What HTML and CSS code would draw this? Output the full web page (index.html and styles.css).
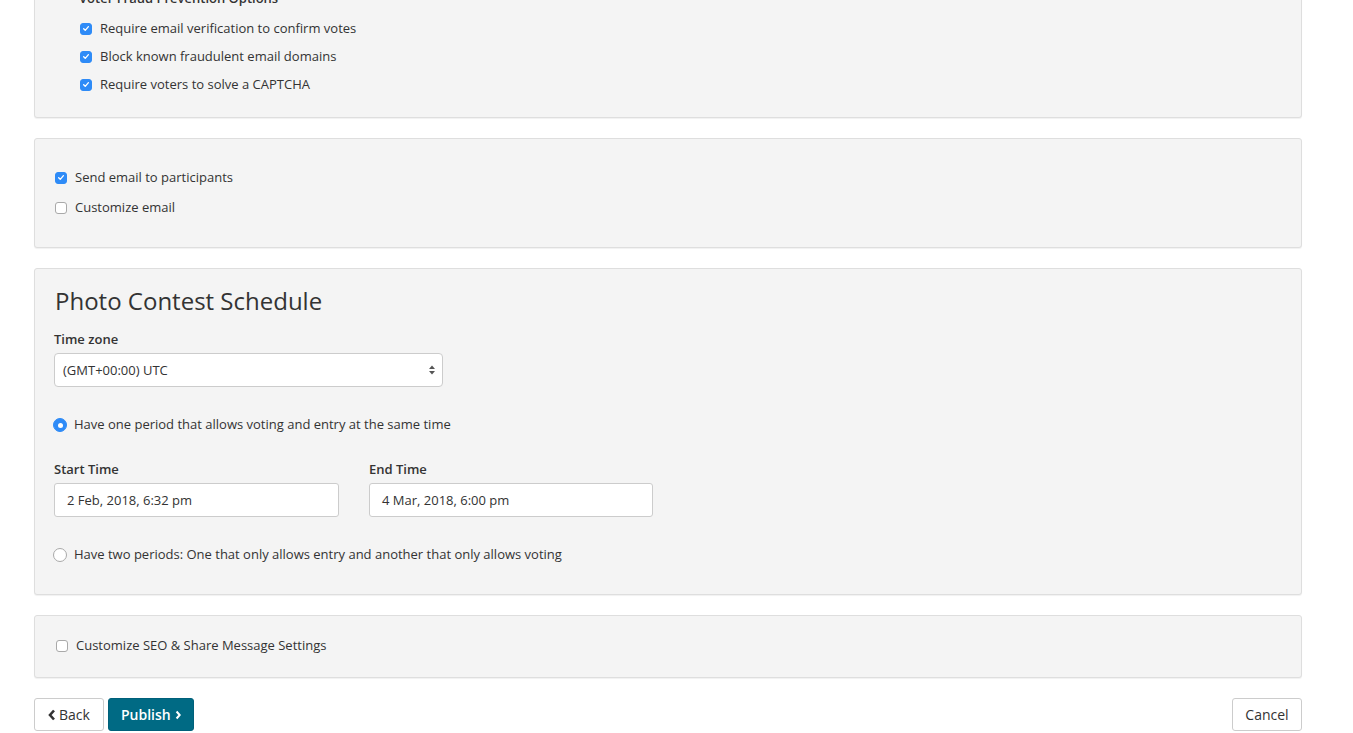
FILE: index.html
```html
<!DOCTYPE html>
<html>
<head>
<meta charset="utf-8">
<link rel="stylesheet" href="styles.css">
</head>
<body>
<div class="page">
  <section class="panel panel-fraud">
    <div class="fraud-group">
      <div class="group-title">Voter Fraud Prevention Options</div>
      <label class="row"><span class="cb on"><svg viewBox="0 0 12 12"><path d="M3.2 6.3l1.9 1.9 3.8-4.4" fill="none" stroke="#fff" stroke-width="1.6" stroke-linecap="round" stroke-linejoin="round"/></svg></span>Require email verification to confirm votes</label>
      <label class="row"><span class="cb on"><svg viewBox="0 0 12 12"><path d="M3.2 6.3l1.9 1.9 3.8-4.4" fill="none" stroke="#fff" stroke-width="1.6" stroke-linecap="round" stroke-linejoin="round"/></svg></span>Block known fraudulent email domains</label>
      <label class="row"><span class="cb on"><svg viewBox="0 0 12 12"><path d="M3.2 6.3l1.9 1.9 3.8-4.4" fill="none" stroke="#fff" stroke-width="1.6" stroke-linecap="round" stroke-linejoin="round"/></svg></span>Require voters to solve a CAPTCHA</label>
    </div>
  </section>

  <section class="panel panel-email">
    <label class="row"><span class="cb on"><svg viewBox="0 0 12 12"><path d="M3.2 6.3l1.9 1.9 3.8-4.4" fill="none" stroke="#fff" stroke-width="1.6" stroke-linecap="round" stroke-linejoin="round"/></svg></span>Send email to participants</label>
    <label class="row row-gap10"><span class="cb"></span>Customize email</label>
  </section>

  <section class="panel panel-schedule">
    <h2 class="title">Photo Contest Schedule</h2>
    <div class="field-label">Time zone</div>
    <div class="select">
      <span>(GMT+00:00) UTC</span>
      <svg class="arrows" viewBox="0 0 8 12"><path d="M4 1.5L7 5H1z" fill="#555"/><path d="M4 10.5L7 7H1z" fill="#555"/></svg>
    </div>
    <label class="row radio-row first"><span class="rb on"><span class="dot"></span></span>Have one period that allows voting and entry at the same time</label>
    <div class="times">
      <div class="time-field start">
        <div class="field-label">Start Time</div>
        <div class="input">2 Feb, 2018, 6:32 pm</div>
      </div>
      <div class="time-field end">
        <div class="field-label">End Time</div>
        <div class="input">4 Mar, 2018, 6:00 pm</div>
      </div>
    </div>
    <label class="row radio-row second"><span class="rb"></span>Have two periods: One that only allows entry and another that only allows voting</label>
  </section>

  <section class="panel panel-seo">
    <label class="row seo-row"><span class="cb"></span>Customize SEO &amp; Share Message Settings</label>
  </section>

  <div class="actions">
    <div class="left-actions">
      <button class="btn btn-default"><svg class="chev" viewBox="0 0 8 12"><path d="M6 1.5L2 6l4 4.5" fill="none" stroke="#333" stroke-width="2.6" stroke-linejoin="miter"/></svg>Back</button>
      <button class="btn btn-primary">Publish<svg class="chev" viewBox="0 0 8 12"><path d="M2 1.5L6 6l-4 4.5" fill="none" stroke="#fff" stroke-width="2.6" stroke-linejoin="miter"/></svg></button>
    </div>
    <button class="btn btn-default btn-cancel">Cancel</button>
  </div>
</div>
</body>
</html>
```

FILE: styles.css
```css
html, body {
  margin: 0;
  padding: 0;
  background: #fff;
}

body {
  font-family: "Open Sans", "Noto Sans", "Liberation Sans", sans-serif;
  font-size: 13px;
  color: #333;
  overflow: hidden;
}

.page {
  width: 1268px;
  margin-left: 34px;
}

.panel {
  background: #f4f4f4;
  border: 1px solid #dedede;
  border-radius: 3px;
  box-shadow: 0 1px 1px rgba(0, 0, 0, 0.06);
  padding-left: 19px;
  padding-right: 19px;
  margin-bottom: 20px;
}

.panel-fraud {
  margin-top: -50px;
  padding-top: 37px;
  padding-bottom: 23px;
}

.fraud-group {
  padding-left: 25px;
}

.group-title {
  font-weight: 600;
  line-height: 20px;
  height: 20px;
  margin-bottom: 10px;
}

.row {
  display: flex;
  align-items: center;
  height: 20px;
  line-height: 20px;
  margin-bottom: 8px;
  white-space: nowrap;
}

.fraud-group .row:last-child {
  margin-bottom: 0;
}

.cb {
  width: 12px;
  height: 12px;
  box-sizing: border-box;
  border: 1px solid #a9a9a9;
  border-radius: 3px;
  background: #fff;
  margin-left: 1px;
  margin-right: 8px;
  flex: none;
  display: flex;
  align-items: center;
  justify-content: center;
  margin-top: 1px;
}

.cb.on {
  background: #2e8bf7;
  border-color: #2e8bf7;
}

.cb svg {
  width: 11px;
  height: 11px;
}

.panel-email {
  padding-top: 28px;
  padding-bottom: 30px;
}

.panel-email .row {
  margin-bottom: 0;
}

.panel-email .row-gap10 {
  margin-top: 10px;
}

.panel-schedule {
  padding-top: 17px;
  padding-bottom: 30px;
}

.title {
  margin: 0 0 13px 1px;
  font-size: 24px;
  font-weight: 400;
  line-height: 30px;
  color: #333;
}

.field-label {
  font-weight: 600;
  line-height: 20px;
  height: 20px;
  margin-bottom: 4px;
}

.select {
  width: 389px;
  height: 34px;
  box-sizing: border-box;
  border: 1px solid #ccc;
  border-radius: 4px;
  background: #fff;
  display: flex;
  align-items: center;
  justify-content: space-between;
  padding: 0 6px 0 8px;
}

.arrows {
  width: 8px;
  height: 12px;
}

.radio-row {
  margin-bottom: 0;
}

.radio-row.first {
  margin-top: 27px;
}

.radio-row.second {
  margin-top: 27px;
}

.rb {
  width: 14px;
  height: 14px;
  box-sizing: border-box;
  border: 1px solid #a9a9a9;
  border-radius: 50%;
  background: #fff;
  margin-right: 7px;
  margin-left: -1px;
  margin-top: 2px;
  flex: none;
  display: flex;
  align-items: center;
  justify-content: center;
}

.rb.on {
  background: #2e8bf7;
  border-color: #2e8bf7;
}

.rb .dot {
  width: 5px;
  height: 5px;
  border-radius: 50%;
  background: #fff;
}

.times {
  display: flex;
  gap: 30px;
  margin-top: 25px;
}

.time-field.start {
  width: 285px;
}

.time-field.end {
  width: 284px;
}

.input {
  height: 34px;
  box-sizing: border-box;
  border: 1px solid #ccc;
  border-radius: 3px;
  background: #fff;
  line-height: 32px;
  padding-left: 12px;
}

.panel-seo {
  padding-top: 19px;
  padding-bottom: 22px;
}

.seo-row {
  margin-bottom: 0;
  padding-left: 1px;
}

.actions {
  display: flex;
  justify-content: space-between;
  align-items: flex-start;
}

.left-actions {
  display: flex;
  gap: 4px;
}

.btn {
  font-family: inherit;
  font-size: 14px;
  height: 33px;
  box-sizing: border-box;
  border-radius: 3px;
  padding: 0 12px;
  display: flex;
  align-items: center;
  cursor: pointer;
}

.btn-default {
  background: #fff;
  color: #333;
  border: 1px solid #ccc;
  width: 70px;
  justify-content: center;
}

.btn-primary {
  background: #006a84;
  color: #fff;
  border: 1px solid #00607a;
  font-weight: 600;
  width: 86px;
  justify-content: center;
}

.chev {
  width: 8px;
  height: 12px;
}

.btn-default .chev {
  margin-right: 3px;
}

.btn-primary .chev {
  margin-left: 4px;
}
```
